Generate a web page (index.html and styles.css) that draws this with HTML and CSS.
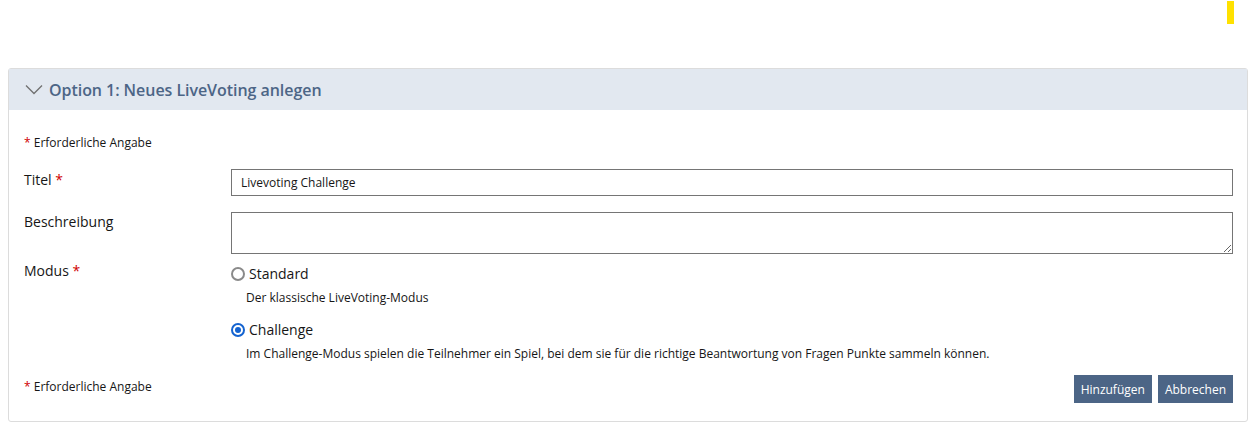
FILE: index.html
```html
<!DOCTYPE html>
<html lang="de">
<head>
<meta charset="utf-8">
<title>LiveVoting</title>
<link rel="stylesheet" href="styles.css">
</head>
<body>
<div class="topbar"><span class="marker"></span></div>
<section class="panel">
  <div class="panel-head">
    <svg class="chev" width="18" height="11" viewBox="0 0 18 11"><path d="M1 1.5 L9 9.5 L17 1.5" fill="none" stroke="#707070" stroke-width="1.3"/></svg>
    <h2 class="panel-title">Option 1: Neues LiveVoting anlegen</h2>
  </div>
  <div class="panel-body">
    <p class="req"><span class="star">*</span> Erforderliche Angabe</p>
    <div class="row row-title">
      <label class="lbl">Titel <span class="star">*</span></label>
      <input class="txt" type="text" value="Livevoting Challenge">
    </div>
    <div class="row row-desc">
      <label class="lbl lbl-desc">Beschreibung</label>
      <textarea class="area"></textarea>
    </div>
    <div class="row row-mode">
      <label class="lbl lbl-mode">Modus <span class="star">*</span></label>
      <div class="options">
        <label class="opt"><input class="radio" type="radio" name="m"> Standard</label>
        <p class="hint">Der klassische LiveVoting-Modus</p>
        <label class="opt opt2"><input class="radio" type="radio" name="m" checked> Challenge</label>
        <p class="hint">Im Challenge-Modus spielen die Teilnehmer ein Spiel, bei dem sie für die richtige Beantwortung von Fragen Punkte sammeln können.</p>
      </div>
    </div>
    <div class="foot">
      <p class="req req-foot"><span class="star">*</span> Erforderliche Angabe</p>
      <div class="btns">
        <button class="btn">Hinzufügen</button>
        <button class="btn">Abbrechen</button>
      </div>
    </div>
  </div>
</section>
</body>
</html>
```

FILE: styles.css
```css
* { box-sizing: border-box; }
html, body { margin: 0; padding: 0; background: #fff; }
body { font-family: "Open Sans", "Liberation Sans", sans-serif; color: #161616; }

.topbar { height: 68px; display: flex; justify-content: flex-end; padding-right: 20px; padding-top: 1px; }
.marker { display: block; width: 7px; height: 23px; background: #ffe100; }

.panel { margin: 0 6px 0 8px; border: 1px solid #dcdcdc; border-radius: 3px; height: 354px; }
.panel-head { height: 41px; background: #e2e8f0; display: flex; align-items: center; padding-left: 16px; }
.chev { margin-right: 6px; margin-top: -1px; }
.panel-title { margin: 0; font-size: 16px; font-weight: 600; color: #4c6586; letter-spacing: -0.05px; }

.panel-body { padding: 24px 14px 0 15px; }
.req { margin: 0; font-size: 12px; line-height: 17px; }
.star { color: #d00000; }

.row { display: grid; grid-template-columns: 207px 1fr; }
.row-title { margin-top: 18px; }
.row-desc { margin-top: 16px; }
.row-mode { margin-top: 10px; }
.lbl { font-size: 14px; line-height: 20px; padding-top: 1px; }
.lbl-desc { padding-top: 0; }
.lbl-mode { padding-top: 0; margin-top: -3px; }

.txt { height: 27px; border: 1px solid #757575; border-radius: 0; padding: 0 9px; font: 12px "Open Sans", sans-serif; color: #161616; outline: none; }
.area { height: 42px; border: 1px solid #757575; border-radius: 0; resize: vertical; font: 12px "Open Sans", sans-serif; display: block; }

.options { display: flex; flex-direction: column; }
.opt { display: flex; align-items: center; font-size: 14px; line-height: 20px; }
.radio { appearance: none; -webkit-appearance: none; margin: 0 4px 0 0; width: 14px; height: 14px; border: 2px solid #8a8a8a; border-radius: 50%; background: #fff; display: grid; place-items: center; }
.radio:checked { border-color: #1463d0; }
.radio:checked::after { content: ""; width: 6px; height: 6px; border-radius: 50%; background: #1463d0; }
.opt2 { margin-top: 14px; }
.hint { margin: 5px 0 0 15px; font-size: 12px; line-height: 17px; }

.foot { display: flex; justify-content: space-between; align-items: center; margin-top: 13px; }
.req-foot { margin-top: -5px; }
.btns { display: flex; gap: 6px; }
.btn { height: 28px; border: none; border-radius: 0; background: #4c6586; color: #fff; font: 12px "Open Sans", sans-serif; padding: 0 7px; }
```
